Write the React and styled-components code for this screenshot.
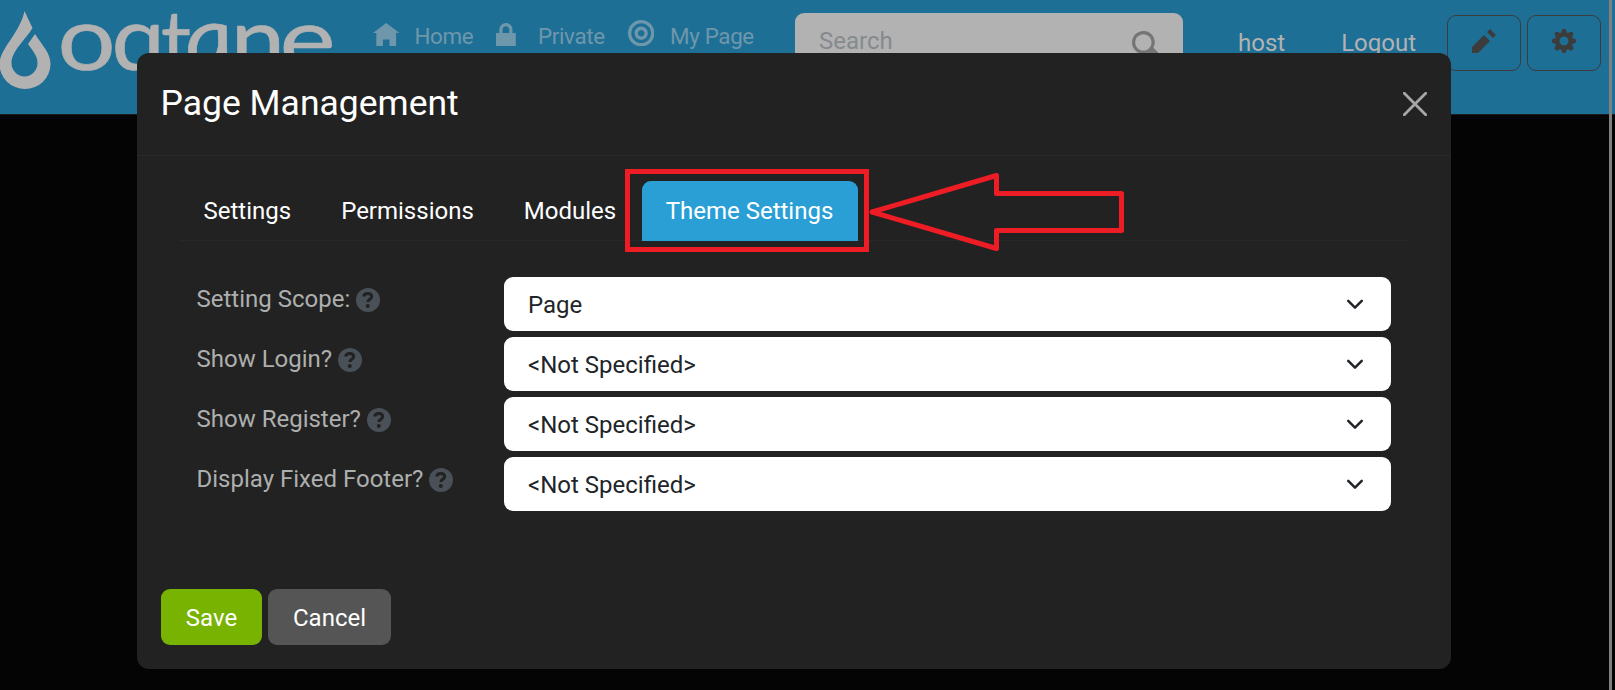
import React from "react";
import styled, { createGlobalStyle } from "styled-components";

const Global = createGlobalStyle`
  * { box-sizing: border-box; }
  body { margin: 0; background: #040404; font-family: Roboto, "Liberation Sans", sans-serif; font-size: 24px; line-height: 36px; overflow: hidden; }
  button { font: inherit; cursor: pointer; }
`;

const Page = styled.div`
  height: 690px;
  overflow: hidden;
  background: #040404;
`;
const Header = styled.header`
  height: 115px;
  display: flex;
  align-items: flex-start;
  background: #1e6f96;
  border-bottom: 1px solid #1b1b1b;
`;
const Logo = styled.svg`
  width: 340px;
  height: 100px;
  flex: none;
  display: block;
`;
const Nav = styled.nav`
  display: flex;
  width: 422px;
  padding: 18px 0 0 33px;
`;
const NavItem = styled.a`
  display: flex;
  flex: none;
  width: ${(p) => p.$w}px;
  color: #6e97ab;
  font-size: 22.4px;
  letter-spacing: -0.35px;
  line-height: 37px;
  white-space: nowrap;
`;
const NavIcon = styled.span`
  display: flex;
  flex: none;
  width: ${(p) => p.$w}px;
  padding-top: ${(p) => p.$top}px;
`;
const Glyph = styled.svg`
  width: ${(p) => p.$size}px;
  height: ${(p) => p.$size}px;
  fill: currentColor;
  flex: none;
  display: block;
`;
const SearchBox = styled.div`
  display: flex;
  justify-content: space-between;
  width: 388px;
  height: 56px;
  margin: 13px 0 0 33px;
  padding: 10px 25px 0 24px;
  border-radius: 9px;
  background: #b2b2b2;
  color: #868a8d;
`;
const SearchIcon = styled.span`
  padding-top: 8px;
  color: #757575;
`;
const UserLinks = styled.div`
  display: flex;
  gap: 56px;
  padding: 25px 0 0 55px;
  width: 264px;
  color: #b2b2b2;
`;
const IconButton = styled.button`
  display: flex;
  justify-content: center;
  width: 74px;
  height: 56px;
  margin: 15px 6px 0 0;
  padding: 13px 0 0;
  border: 1px solid #3c3c3c;
  border-radius: 9px;
  background: transparent;
  color: #3c3c3c;
`;
const EdgeBar = styled.div`
  position: fixed;
  top: 0;
  bottom: 0;
  left: 1609px;
  width: 3px;
  background: #808080;
`;

const Modal = styled.section`
  position: fixed;
  top: 53px;
  left: 137px;
  width: 1314px;
  height: 616px;
  border-radius: 12px;
  background: #222;
  color: #fff;
`;
const ModalHeader = styled.div`
  display: flex;
  justify-content: space-between;
  align-items: center;
  height: 103px;
  padding: 0 24px 0 23.5px;
  border-bottom: 1px solid #282828;
`;
const Title = styled.h1`
  margin: 0;
  font-size: 35.5px;
  font-weight: 400;
  line-height: 53px;
  padding-bottom: 1px;
`;
const Close = styled.button`
  display: flex;
  padding: 0;
  border: 0;
  background: none;
  color: #a7a7a7;
`;
const Tabs = styled.div`
  display: flex;
  height: 60px;
  margin: 25px 42px 0;
  border-bottom: 1px solid #282828;
`;
const Tab = styled.button`
  height: 60px;
  padding: 0 25.5px 0 24.5px;
  border: 0;
  border-radius: 9px 9px 0 0;
  background: ${(p) => (p.$active ? "#2a9fd6" : "transparent")};
  color: #fff;
  ${(p) => p.$active && "padding: 0 25px 0 24px;"}
`;
const Form = styled.div`
  display: grid;
  row-gap: 6px;
  padding: 36px 60px 0 59.5px;
`;
const Field = styled.div`
  display: grid;
  grid-template-columns: 307.5px 887px;
`;
const Label = styled.label`
  display: flex;
  gap: 6px;
  padding-top: 4px;
  color: #adafae;
  svg { margin-top: 7px; color: #495057; }
`;
const Select = styled.div`
  display: flex;
  justify-content: space-between;
  align-items: center;
  height: 54px;
  padding: 1px 27px 0 24px;
  border-radius: 9px;
  background: #fff;
  color: #212529;
`;
const Actions = styled.div`
  display: flex;
  gap: 6px;
  padding: 78px 24px 0;
`;
const Button = styled.button`
  width: ${(p) => p.$w}px;
  height: 56px;
  padding: 2px 0 0;
  border: 0;
  border-radius: 9px;
  background: ${(p) => (p.$primary ? "#77b300" : "#555")};
  color: #fff;
`;
const Annotation = styled.svg`
  position: fixed;
  left: 620px;
  top: 160px;
  width: 520px;
  height: 100px;
  fill: none;
  stroke: #ee1c24;
`;

const shapes = {
  home: "M4 0l-4 3h1v4h2v-2h2v2h2v-4.03l1 .03-4-3z",
  lock: "M3 0c-1.1 0-2 .9-2 2v1h-1v4h6v-4h-1v-1c0-1.1-.9-2-2-2zm0 1c.56 0 1 .44 1 1v1h-2v-1c0-.56.44-1 1-1z",
  target: "M4 0c-2.2 0-4 1.8-4 4s1.8 4 4 4 4-1.8 4-4-1.8-4-4-4zm0 1c1.66 0 3 1.34 3 3s-1.34 3-3 3-3-1.34-3-3 1.34-3 3-3zm0 1c-1.1 0-2 .9-2 2s.9 2 2 2 2-.9 2-2-.9-2-2-2zm0 1c.56 0 1 .44 1 1s-.44 1-1 1-1-.44-1-1 .44-1 1-1z",
  pencil: "M6 0l-1 1 2 2 1-1-2-2zm-2 2l-4 4v2h2l4-4-2-2z",
  cog: "M3.5 0l-.5 1.19-.31.13-1.19-.5-.72.72.5 1.19-.13.31-1.15.46v1l1.15.5.13.31-.5 1.19.72.72 1.19-.5.31.13.5 1.19h1l.5-1.19.31-.13 1.19.5.72-.72-.5-1.19.13-.31 1.15-.5v-1l-1.15-.46-.13-.31.5-1.19-.72-.72-1.19.5-.31-.13-.5-1.19h-1zm.5 2.5c.83 0 1.5.67 1.5 1.5s-.67 1.5-1.5 1.5-1.5-.67-1.5-1.5.67-1.5 1.5-1.5z",
  search: "M3.5 0c-1.93 0-3.5 1.57-3.5 3.5s1.57 3.5 3.5 3.5c.59 0 1.17-.14 1.66-.41a1 1 0 0 0 .13.13l1 1a1.02 1.02 0 1 0 1.44-1.44l-1-1a1 1 0 0 0-.16-.13c.27-.49.44-1.06.44-1.66 0-1.93-1.55-3.5-3.5-3.5zm0 1c1.39 0 2.5 1.11 2.5 2.5s-1.11 2.5-2.5 2.5-2.5-1.11-2.5-2.5 1.11-2.5 2.5-2.5z",
};

const Icon = ({ name, size }) => (
  <Glyph $size={size} viewBox="0 0 8 8" fillRule="evenodd"><path d={shapes[name]} /></Glyph>
);

const Help = () => (
  <Glyph $size={24} viewBox="0 0 24 24">
    <circle cx="12" cy="12" r="12" />
    <path d="M7.6 8.6C8 6.4 9.5 5.4 11.8 5.4c2.4 0 3.900 1.300 3.900 3.200 0 2.700-3.800 2.700-3.800 5.300" fill="none" stroke="#222" strokeWidth="3" />
    <circle cx="11.800" cy="18" r="2" fill="#222" />
  </Glyph>
);

// Each wordmark letter: character, left edge, baseline, horizontal stretch.
const letters = [
  ["o", 57.5, 69.5, 1.14],
  ["q", 111.5, 70, 1.06],
  ["t", 161, 74, 0.93],
  ["a", 188.5, 70, 1.05],
  ["n", 230.5, 70.5, 1.09],
  ["e", 279.5, 71, 1.18],
];
const fields = [
  ["Setting Scope:", "Page"],
  ["Show Login?", "<Not Specified>"],
  ["Show Register?", "<Not Specified>"],
  ["Display Fixed Footer?", "<Not Specified>"],
];

export default function App() {
  return (
    <Page>
      <Global />
      <Header>
        <Logo viewBox="0 0 340 100" fill="#b2b2b2">
          <path d="M24.5 11L32.5 28C26 39 11.5 51 11.5 63a13 13.5 0 0 0 26 0C37.5 56 33 51 28 44L35 34C42 45 50.5 53 50.5 64a25.5 25 0 0 1-51 0C-.5 49 20 33 24.5 11Z" />
          <g fontFamily="Lato" fontSize="90" stroke="#b2b2b2" strokeWidth="0.6">
            {letters.map(([c, x, y, sx]) => (
              <text
                key={c}
                fontStyle={c === "a" ? "italic" : "normal"}
                transform={`translate(${x} ${y}) scale(${sx} 1)${c === "a" ? " skewX(8)" : ""}`}
              >
                {c}
              </text>
            ))}
          </g>
        </Logo>
        <Nav>
          <NavItem $w={123}><NavIcon $w={41.5} $top={5}><Icon name="home" size={26.4} /></NavIcon>Home</NavItem>
          <NavItem $w={132}><NavIcon $w={42} $top={5}><Icon name="lock" size={26.4} /></NavIcon>Private</NavItem>
          <NavItem $w={130}><NavIcon $w={42} $top={2}><Icon name="target" size={26.4} /></NavIcon>My Page</NavItem>
        </Nav>
        <SearchBox>Search<SearchIcon><Icon name="search" size={26} /></SearchIcon></SearchBox>
        <UserLinks><span>host</span><span>Logout</span></UserLinks>
        <IconButton><Icon name="pencil" size={24} /></IconButton>
        <IconButton><Icon name="cog" size={24} /></IconButton>
      </Header>
      <EdgeBar />
      <Modal>
        <ModalHeader>
          <Title>Page Management</Title>
          <Close>
            <svg width="24" height="24" viewBox="0 0 24 24" fill="none" stroke="currentColor" strokeWidth="2.8" strokeLinecap="round"><path d="M1.3 1.3L22.7 22.7M22.7 1.3L1.3 22.7" /></svg>
          </Close>
        </ModalHeader>
        <Tabs>
          <Tab>Settings</Tab>
          <Tab>Permissions</Tab>
          <Tab>Modules</Tab>
          <Tab $active>Theme Settings</Tab>
        </Tabs>
        <Form>
          {fields.map(([label, value]) => (
            <Field key={label}>
              <Label><span>{label}</span><Help /></Label>
              <Select>
                {value}
                <svg width="18" height="18" viewBox="0 0 16 16" fill="none" stroke="#212529" strokeWidth="2.2" strokeLinecap="round" strokeLinejoin="round"><path d="M2 4.3l6 6 6-6" /></svg>
              </Select>
            </Field>
          ))}
        </Form>
        <Actions>
          <Button $primary $w={101}>Save</Button>
          <Button $w={123}>Cancel</Button>
        </Actions>
      </Modal>
      <Annotation viewBox="620 160 520 100" strokeWidth="5">
        <rect x="627.5" y="171.5" width="239" height="78" />
        <path d="M872 212L996.5 175.5V193.5H1121.5V230.5H996.5V248.5Z" strokeLinejoin="round" />
      </Annotation>
    </Page>
  );
}
